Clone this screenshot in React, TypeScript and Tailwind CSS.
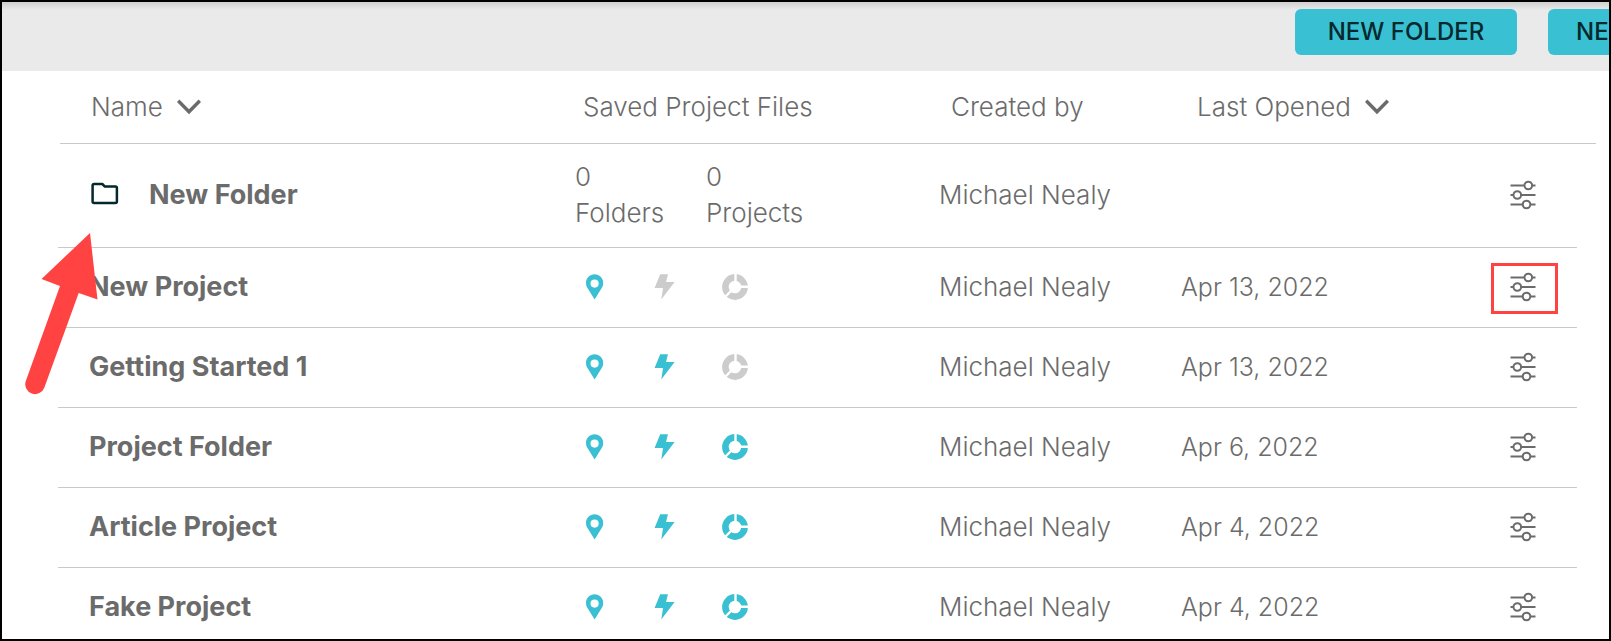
import React from "react";

interface IProject {
  name: string;
  owner: string;
  opened: string;
  maps: boolean;
  flash: boolean;
  reports: boolean;
  highlighted?: boolean;
}

const projects: IProject[] = [
  { name: "New Project", owner: "Michael Nealy", opened: "Apr 13, 2022", maps: true, flash: false, reports: false, highlighted: true },
  { name: "Getting Started 1", owner: "Michael Nealy", opened: "Apr 13, 2022", maps: true, flash: true, reports: false },
  { name: "Project Folder", owner: "Michael Nealy", opened: "Apr 6, 2022", maps: true, flash: true, reports: true },
  { name: "Article Project", owner: "Michael Nealy", opened: "Apr 4, 2022", maps: true, flash: true, reports: true },
  { name: "Fake Project", owner: "Michael Nealy", opened: "Apr 4, 2022", maps: true, flash: true, reports: true },
];

const rowClass =
  "grid grid-cols-[517fr_364fr_242fr_291fr_105fr] items-center border-b border-[#c9c9c9] pb-px";

const iconColor = (active: boolean) =>
  active ? "text-[#39c1d3]" : "text-[#cccccc]";

const Chevron: React.FC = () => (
  <svg width="24" height="16" viewBox="0 0 24 16" fill="none" aria-hidden="true">
    <path d="M1.2 1.8 12 12.8 22.8 1.8" stroke="#6b6b6b" strokeWidth="3.4" />
  </svg>
);

const FolderIcon: React.FC = () => (
  <svg width="28" height="26" viewBox="0 0 28 26" fill="none" aria-hidden="true">
    <path
      d="M3.1 2h8.2l2.6 2.6h10.5a1.5 1.5 0 0 1 1.5 1.5v13.3a1.5 1.5 0 0 1-1.5 1.5H3.1a1.5 1.5 0 0 1-1.5-1.5V3.5A1.5 1.5 0 0 1 3.1 2Z"
      stroke="#03292e"
      strokeWidth="2.5"
      strokeLinejoin="round"
    />
  </svg>
);

const PinIcon: React.FC<{ active: boolean }> = ({ active }) => (
  <svg width="40" height="26" viewBox="0 0 40 26" className={iconColor(active)} aria-hidden="true">
    <path
      fill="currentColor"
      fillRule="evenodd"
      d="M19.6.3C14.8.3 11 4.1 11 8.9c0 2.3.8 4.2 2.1 6.2l6.5 10.5 6.5-10.5c1.3-2 2.1-3.9 2.1-6.2C28.2 4.1 24.4.3 19.6.3Zm0 5.2a4.1 4.1 0 1 1 0 8.2 4.1 4.1 0 0 1 0-8.2Z"
    />
  </svg>
);

const BoltIcon: React.FC<{ active: boolean }> = ({ active }) => (
  <svg width="40" height="26" viewBox="0 0 40 26" className={iconColor(active)} aria-hidden="true">
    <path fill="currentColor" d="M15.2.3H23l-2 7.7h8.6L16.3 25.4 18 14H9.6z" />
  </svg>
);

const RingIcon: React.FC<{ active: boolean }> = ({ active }) => (
  <svg width="40" height="26" viewBox="0 0 40 26" className={iconColor(active)} aria-hidden="true">
    <circle cx="20" cy="13" r="9.6" fill="none" stroke="currentColor" strokeWidth="6.6" />
    <path d="M20.5 9V-1M24 12.7h11M17 16 9 24" stroke="#fff" strokeWidth="2.4" fill="none" />
  </svg>
);

const SettingsButton: React.FC<{ label: string; highlighted?: boolean }> = ({
  label,
  highlighted,
}) => (
  <button
    type="button"
    aria-label={label}
    className={`flex h-[51px] w-[67px] items-center justify-center border-3 pr-1 pb-[3px] ${
      highlighted ? "border-[#ff4343]" : "border-transparent"
    }`}
  >
    <svg width="26" height="30" viewBox="0 0 26 30" fill="none" stroke="#6b6b6b" aria-hidden="true">
      <path d="M.5 5.5H25.5M.5 15H25.5M.5 24.5H25.5" strokeWidth="2" />
      <g fill="#fff" strokeWidth="2">
        <circle cx="18.3" cy="5.5" r="3.8" />
        <circle cx="7.3" cy="15" r="3.8" />
        <circle cx="16.5" cy="24.5" r="3.8" />
      </g>
    </svg>
  </button>
);

const ProjectRow: React.FC<{ project: IProject }> = ({ project }) => (
  <tr className={`${rowClass} h-20`}>
    <td className="pl-[31px] text-[27px] font-bold">{project.name}</td>
    <td className="flex gap-[30px]">
      <PinIcon active={project.maps} />
      <BoltIcon active={project.flash} />
      <RingIcon active={project.reports} />
    </td>
    <td>{project.owner}</td>
    <td className="text-[25px]">{project.opened}</td>
    <td className="flex justify-center pt-[3px]">
      <SettingsButton label={`${project.name} options`} highlighted={project.highlighted} />
    </td>
  </tr>
);

const ActionBar: React.FC = () => (
  <div className="flex h-[69px] justify-end gap-[31px] bg-[linear-gradient(#cfcfcf,#eaeaea_8px)] pt-[7px] text-2xl font-medium text-[#03292e]">
    <button type="button" className="h-[46px] w-[222px] shrink-0 rounded-md bg-[#39c1d3]">
      NEW FOLDER
    </button>
    {/* runs off the right edge of the window */}
    <button
      type="button"
      className="-mr-[161px] h-[46px] w-[222px] shrink-0 rounded-md bg-[#39c1d3] pl-7 text-left whitespace-nowrap"
    >
      NEW PROJECT
    </button>
  </div>
);

const App: React.FC = () => {
  return (
    <div className="relative h-screen overflow-hidden border-2 border-black bg-white font-['Inter',sans-serif] text-[26px] leading-9 font-light text-[#6b6b6b]">
      <ActionBar />
      <table className="block">
        <thead className="block pr-[13px] pl-[58px]">
          <tr className="grid h-[73px] grid-cols-[523fr_368fr_246fr_399fr] items-center border-b border-[#c9c9c9] pb-px text-left">
            <th className="pl-[31px] font-light">
              <button type="button" className="flex items-center gap-3.5">
                Name <Chevron />
              </button>
            </th>
            <th className="font-light">Saved Project Files</th>
            <th className="font-light">Created by</th>
            <th className="font-light">
              <button type="button" className="flex items-center gap-3.5">
                Last Opened <Chevron />
              </button>
            </th>
          </tr>
        </thead>
        <tbody className="block pr-8 pl-14">
          <tr className={`${rowClass} h-[104px]`}>
            <td className="flex items-center gap-[30px] pl-[33px] text-[27px] font-bold">
              <FolderIcon /> New Folder
            </td>
            <td className="flex">
              <span className="w-[131px]">
                0<br />
                Folders
              </span>
              <span className="w-[131px]">
                0<br />
                Projects
              </span>
            </td>
            <td>Michael Nealy</td>
            <td></td>
            <td className="flex justify-center pt-[3px]">
              <SettingsButton label="New Folder options" />
            </td>
          </tr>
          {projects.map((project) => (
            <ProjectRow key={project.name} project={project} />
          ))}
        </tbody>
      </table>
      {/* callout arrow pointing at the folder icon */}
      <svg
        width="76"
        height="164"
        viewBox="24 232 76 164"
        className="pointer-events-none absolute top-[230px] left-[22px]"
        aria-hidden="true"
      >
        <path
          fill="#ff4343"
          d="M90 233 97.5 299.5 78.7 293 44.4 387.5A9.8 9.8 0 0 1 25.8 381L60 286 41.5 279Z"
        />
      </svg>
    </div>
  );
};

export default App;
